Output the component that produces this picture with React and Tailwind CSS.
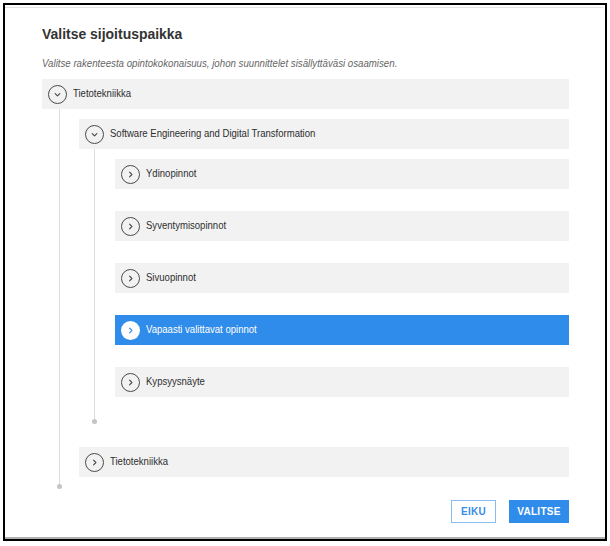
import React from "react";

const sans = { fontFamily: '"Liberation Sans", Arial, sans-serif' };

function Chevron({ dir = "right", color = "#444" }) {
  if (dir === "down") {
    return (
      <svg width="9" height="9" viewBox="0 0 9 9" fill="none">
        <path d="M2.2 3.6 L4.5 5.9 L6.8 3.6" stroke={color} strokeWidth="1.1" strokeLinecap="round" strokeLinejoin="round" />
      </svg>
    );
  }
  return (
    <svg width="9" height="9" viewBox="0 0 9 9" fill="none">
      <path d="M3.6 2.2 L5.9 4.5 L3.6 6.8" stroke={color} strokeWidth="1.1" strokeLinecap="round" strokeLinejoin="round" />
    </svg>
  );
}

function Row({ label, expanded = false, selected = false }) {
  return (
    <div
      className={
        "h-[30px] flex items-center pl-[6px] gap-[6px] " +
        (selected ? "bg-[#308ceb]" : "bg-[#f2f2f2]")
      }
    >
      <div
        className={
          "w-[19px] h-[19px] rounded-full flex items-center justify-center shrink-0 " +
          (selected ? "bg-white" : "border border-[#4a4a4a]")
        }
      >
        <Chevron dir={expanded ? "down" : "right"} color={selected ? "#308ceb" : "#444"} />
      </div>
      <span
        className={
          "inline-block origin-left scale-x-[0.83] whitespace-nowrap text-[11.5px] leading-none " +
          (selected ? "text-white" : "text-[#2e2e2e]")
        }
        style={sans}
      >
        {label}
      </span>
    </div>
  );
}

export default function App() {
  return (
    <div className="w-[610px] h-[546px] bg-white pt-[3px] pl-[3px]">
      <div className="w-[604px] h-[538px] border-2 border-black flex flex-col">
        <div className="mt-[2px] h-px bg-[#e4e4e4] mr-[2px]" />
        <div className="flex-1 flex flex-col pl-[37px] pr-[36px]">
          <h1
            className="mt-[16px] origin-left scale-x-[0.9] whitespace-nowrap text-[15.5px] leading-[20px] font-bold text-[#333]"
            style={sans}
          >
            Valitse sijoituspaikka
          </h1>
          <p
            className="mt-[12px] origin-left scale-x-[0.88] whitespace-nowrap text-[11px] leading-[14px] italic text-[#666]"
            style={sans}
          >
            Valitse rakenteesta opintokokonaisuus, johon suunnittelet sisällyttäväsi osaamisen.
          </p>
          <div className="mt-[9px]">
            <Row label="Tietotekniikka" expanded />
            <div className="relative ml-[17px] border-l border-[#dcdcdc] pl-[19px] pt-[10px] pb-[9px]">
              <Row label="Software Engineering and Digital Transformation" expanded />
              <div className="relative ml-[15px] border-l border-[#dcdcdc] pl-[20px] pt-[10px] pb-[24px] flex flex-col gap-[22px]">
                <Row label="Ydinopinnot" />
                <Row label="Syventymisopinnot" />
                <Row label="Sivuopinnot" />
                <Row label="Vapaasti valittavat opinnot" selected />
                <Row label="Kypsyysnäyte" />
                <div className="absolute -bottom-[3px] -left-[3px] w-[5px] h-[5px] rounded-full bg-[#c4c4c4]" />
              </div>
              <div className="mt-[26px]">
                <Row label="Tietotekniikka" />
              </div>
              <div className="absolute -bottom-[3px] -left-[3px] w-[5px] h-[5px] rounded-full bg-[#c4c4c4]" />
            </div>
          </div>
          <div className="mt-[14px] flex justify-end gap-[13px]">
            <button
              className="w-[45px] h-[23px] border border-[#8dbdf0] bg-white text-[#3a8de6] text-[10px] font-bold tracking-[0.3px]"
              style={sans}
            >
              EIKU
            </button>
            <button
              className="w-[60px] h-[23px] bg-[#308ceb] text-white text-[10px] font-bold tracking-[0.3px]"
              style={sans}
            >
              VALITSE
            </button>
          </div>
        </div>
        <div className="h-[2px] bg-[#b0b0b0]" />
      </div>
    </div>
  );
}
